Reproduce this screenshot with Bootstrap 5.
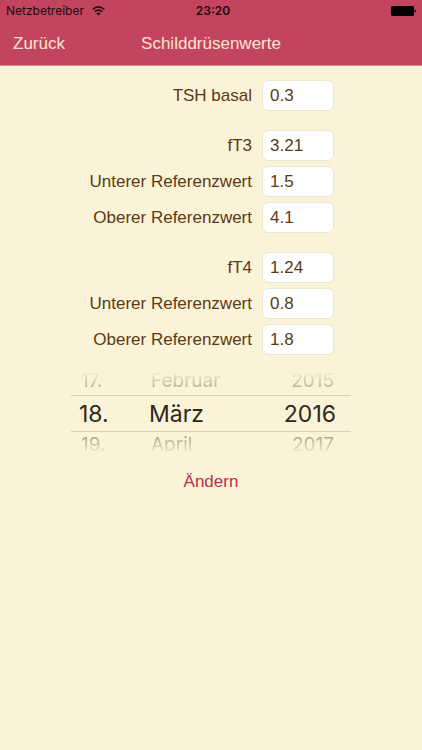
<!DOCTYPE html>
<html lang="de">
<head>
<meta charset="utf-8">
<meta name="viewport" content="width=device-width, initial-scale=1">
<title>Schilddrüsenwerte</title>
<link href="https://cdn.jsdelivr.net/npm/bootstrap@5.3.0/dist/css/bootstrap.min.css" rel="stylesheet">
<style>
  body { background: #fbf3d7; color: #5c3a14; font-family: "Liberation Sans", Arial, sans-serif; font-size: 17px; line-height: 22px; }
  .app-header { background: #c3445e; border-bottom: 1px solid #dd8c92; }
  .status-line { height: 22px; color: #1c0a0e; font: 12px/22px Inter, sans-serif; padding: 0 6px; }
  .status-line svg { display: block; }
  .title-line { height: 43px; color: #fde3d0; padding: 0 13px; }
  .title-line h1 { font-size: 17px; line-height: 22px; font-weight: 400; }
  .title-line a { color: inherit; }
  .panel { max-width: 280px; padding-top: 14px; }
  .fields { padding-right: 17px; gap: 19px; }
  .field-set { gap: 5px; }
  .field-line { gap: 10px; }
  .field-line .form-control { width: 72px; height: 31px; padding: 0 7px; border: 1px solid #ece5d2; border-radius: 6px; background: #fff; color: #5c3a14; font-size: 17px; line-height: 22px; }
  .picker { margin-top: 12px; font-family: Inter, sans-serif; }
  .picker-line { height: 28px; padding: 0 8px; }
  .picker-line button { border: 0; padding: 0; background: none; color: #b0aa96; font-size: 19px; line-height: 24px; text-align: left; }
  .picker-line .c-day { width: 70px; padding-left: 2px; }
  .picker-line .c-month { width: 112px; padding-left: 2px; }
  .picker-line .c-year { flex: 1; text-align: right; padding-right: 9px; }
  .picker-line.chosen { height: 37px; border: solid #d9d2ba; border-width: 1px 0; }
  .picker-line.chosen button { color: #2b2821; font-size: 23px; line-height: 34px; padding-left: 0; }
  .picker-line.chosen .c-year { padding-right: 7px; }
  .fade-up { padding-bottom: 2px; -webkit-mask-image: linear-gradient(to top, #000 20%, transparent 85%); mask-image: linear-gradient(to top, #000 20%, transparent 85%); }
  .fade-down { padding-top: 1px; -webkit-mask-image: linear-gradient(#000 20%, transparent 80%); mask-image: linear-gradient(#000 20%, transparent 80%); }
  .save { margin-top: 11px; color: #b5314e; font-size: 17px; line-height: 22px; }
</style>
<script src="https://cdn.jsdelivr.net/npm/bootstrap@5.3.0/dist/js/bootstrap.bundle.min.js" defer></script>
</head>
<body>
<header class="app-header">
  <div class="status-line row g-0 align-items-center">
    <div class="col d-flex align-items-center gap-2">
      <span>Netzbetreiber</span>
      <svg width="13" height="10" viewBox="0 0 13 10" fill="none" stroke="#1c0a0e" stroke-width="1.6" aria-hidden="true"><path d="M.7 3.4Q6.5-1.6 12.3 3.4M2.8 5.7Q6.5 2.5 10.2 5.7"/><path d="M6.5 9.6 4.3 7.4Q6.5 5.6 8.7 7.4Z" fill="#1c0a0e" stroke="none"/></svg>
    </div>
    <div class="col-auto fw-semibold ps-1">23:20</div>
    <div class="col d-flex justify-content-end">
      <svg width="26" height="10" viewBox="0 0 26 10" role="img" aria-label="Akku voll"><rect x="1" width="23" height="10" rx="1.5" fill="#000"/><path d="M24.6 3.2Q26 4 26 5T24.6 6.8Z" fill="#000"/></svg>
    </div>
  </div>
  <nav class="title-line row g-0 align-items-center">
    <div class="col"><a href="#" class="text-decoration-none">Zurück</a></div>
    <h1 class="col-auto mb-0">Schilddrüsenwerte</h1>
    <div class="col"></div>
  </nav>
</header>
<main class="panel mx-auto">
  <form>
    <div class="fields d-flex flex-column">
      <div class="field-set d-flex flex-column">
        <div class="field-line d-flex align-items-center justify-content-end"><label for="tsh">TSH basal</label><input class="form-control" id="tsh" inputmode="decimal" value="0.3"></div>
      </div>
      <div class="field-set d-flex flex-column">
        <div class="field-line d-flex align-items-center justify-content-end"><label for="ft3">fT3</label><input class="form-control" id="ft3" inputmode="decimal" value="3.21"></div>
        <div class="field-line d-flex align-items-center justify-content-end"><label for="ft3min">Unterer Referenzwert</label><input class="form-control" id="ft3min" inputmode="decimal" value="1.5"></div>
        <div class="field-line d-flex align-items-center justify-content-end"><label for="ft3max">Oberer Referenzwert</label><input class="form-control" id="ft3max" inputmode="decimal" value="4.1"></div>
      </div>
      <div class="field-set d-flex flex-column">
        <div class="field-line d-flex align-items-center justify-content-end"><label for="ft4">fT4</label><input class="form-control" id="ft4" inputmode="decimal" value="1.24"></div>
        <div class="field-line d-flex align-items-center justify-content-end"><label for="ft4min">Unterer Referenzwert</label><input class="form-control" id="ft4min" inputmode="decimal" value="0.8"></div>
        <div class="field-line d-flex align-items-center justify-content-end"><label for="ft4max">Oberer Referenzwert</label><input class="form-control" id="ft4max" inputmode="decimal" value="1.8"></div>
      </div>
    </div>
    <div class="picker" role="group" aria-label="Datum">
      <div class="picker-line fade-up d-flex align-items-end"><button type="button" class="c-day">17.</button><button type="button" class="c-month">Februar</button><button type="button" class="c-year">2015</button></div>
      <div class="picker-line chosen d-flex align-items-center"><button type="button" class="c-day">18.</button><button type="button" class="c-month">März</button><button type="button" class="c-year">2016</button></div>
      <div class="picker-line fade-down d-flex align-items-start"><button type="button" class="c-day">19.</button><button type="button" class="c-month">April</button><button type="button" class="c-year">2017</button></div>
    </div>
    <div class="text-center"><button type="submit" class="save btn border-0 p-0">Ändern</button></div>
  </form>
</main>
</body>
</html>
